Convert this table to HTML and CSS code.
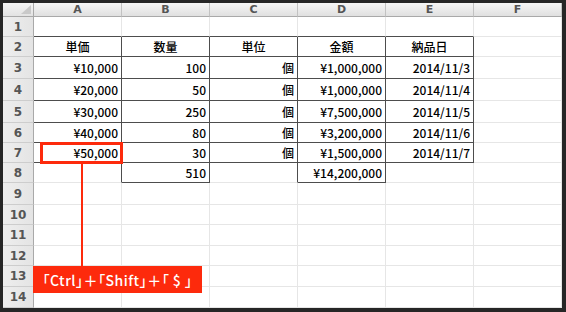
FILE: index.html
```html
<!DOCTYPE html>
<html lang="ja">
<head>
<meta charset="utf-8">
<link rel="stylesheet" href="styles.css">
</head>
<body>
<div class="page">
  <div class="sheet">
    <div class="corner"><span class="tri"></span></div>
    <div class="ch">A</div><div class="ch">B</div><div class="ch">C</div><div class="ch">D</div><div class="ch">E</div><div class="ch">F</div>

    <div class="rh">1</div>
    <div class="cell db"></div><div class="cell db"></div><div class="cell db"></div><div class="cell db"></div><div class="cell db"></div><div class="cell"></div>

    <div class="rh">2</div>
    <div class="cell dr db c">単価</div><div class="cell dr db c">数量</div><div class="cell dr db c">単位</div><div class="cell dr db c">金額</div><div class="cell dr db c">納品日</div><div class="cell"></div>

    <div class="rh">3</div>
    <div class="cell dr db r">¥10,000</div><div class="cell dr db r">100</div><div class="cell dr db r">個</div><div class="cell dr db r">¥1,000,000</div><div class="cell dr db r">2014/11/3</div><div class="cell"></div>

    <div class="rh">4</div>
    <div class="cell dr db r">¥20,000</div><div class="cell dr db r">50</div><div class="cell dr db r">個</div><div class="cell dr db r">¥1,000,000</div><div class="cell dr db r">2014/11/4</div><div class="cell"></div>

    <div class="rh">5</div>
    <div class="cell dr db r">¥30,000</div><div class="cell dr db r">250</div><div class="cell dr db r">個</div><div class="cell dr db r">¥7,500,000</div><div class="cell dr db r">2014/11/5</div><div class="cell"></div>

    <div class="rh">6</div>
    <div class="cell dr db r">¥40,000</div><div class="cell dr db r">80</div><div class="cell dr db r">個</div><div class="cell dr db r">¥3,200,000</div><div class="cell dr db r">2014/11/6</div><div class="cell"></div>

    <div class="rh">7</div>
    <div class="cell dr db r">¥50,000</div><div class="cell dr db r">30</div><div class="cell dr db r">個</div><div class="cell dr db r">¥1,500,000</div><div class="cell dr db r">2014/11/7</div><div class="cell"></div>

    <div class="rh">8</div>
    <div class="cell dr"></div><div class="cell dr db r">510</div><div class="cell dr"></div><div class="cell dr db r">¥14,200,000</div><div class="cell"></div><div class="cell"></div>

    <div class="rh">9</div>
    <div class="cell"></div><div class="cell"></div><div class="cell"></div><div class="cell"></div><div class="cell"></div><div class="cell"></div>
    <div class="rh">10</div>
    <div class="cell"></div><div class="cell"></div><div class="cell"></div><div class="cell"></div><div class="cell"></div><div class="cell"></div>
    <div class="rh">11</div>
    <div class="cell"></div><div class="cell"></div><div class="cell"></div><div class="cell"></div><div class="cell"></div><div class="cell"></div>
    <div class="rh">12</div>
    <div class="cell"></div><div class="cell"></div><div class="cell"></div><div class="cell"></div><div class="cell"></div><div class="cell"></div>
    <div class="rh">13</div>
    <div class="cell"></div><div class="cell"></div><div class="cell"></div><div class="cell"></div><div class="cell"></div><div class="cell"></div>
    <div class="rh">14</div>
    <div class="cell"></div><div class="cell"></div><div class="cell"></div><div class="cell"></div><div class="cell"></div><div class="cell"></div>
  </div>

  <div class="mark-box"></div>
  <div class="mark-line"></div>
  <div class="callout">「Ctrl」＋「Shift」＋「 $ 」</div>
</div>
</body>
</html>
```
FILE: styles.css
```css
* { box-sizing: border-box; }
html, body { margin: 0; padding: 0; background: #fff; }
.page { position: relative; width: 566px; height: 312px; }
.sheet {
  display: grid;
  grid-template-columns: 31px repeat(6, 88px);
  grid-template-rows: 14px 20px 20px 22px 22px 22px 20px 20px 20px 22px 20px 21px 20px 21px 21px;
  border-style: solid;
  border-color: #262626;
  border-width: 3px 4px 4px 3px;
  width: 566px;
  height: 312px;
}
.corner {
  background: linear-gradient(#f5f5f5, #e2e2e2);
  border-right: 1px solid #a9a9a9;
  border-bottom: 1px solid #a9a9a9;
  display: flex;
  justify-content: flex-end;
  align-items: flex-end;
  padding: 0 2px 2px 0;
}
.tri {
  width: 10px;
  height: 9px;
  background: #c9c9c9;
  clip-path: polygon(100% 0, 100% 100%, 0 100%);
}
.ch {
  background: linear-gradient(#f6f6f6, #e0e0e0);
  border-right: 1px solid #c2c2c2;
  border-bottom: 1px solid #a9a9a9;
  font: bold 11px/13px "DejaVu Sans", sans-serif;
  color: #555;
  text-align: center;
}
.rh {
  background: linear-gradient(90deg, #eeeeee, #e4e4e4);
  border-right: 1px solid #a9a9a9;
  border-bottom: 1px solid #cdcdcd;
  font: bold 12px "DejaVu Sans", sans-serif;
  color: #555;
  display: flex;
  align-items: center;
  justify-content: center;
}
.cell {
  border-right: 1px solid #e6e6e6;
  border-bottom: 1px solid #e6e6e6;
  font: 500 12px "Noto Sans CJK JP", sans-serif;
  color: #000;
  display: flex;
  align-items: center;
  padding: 0 3px;
  white-space: nowrap;
}
.cell.r { justify-content: flex-end; }
.cell.c { justify-content: center; }
.cell.dr { border-right-color: #4d4d4d; }
.cell.db { border-bottom-color: #4d4d4d; }

.mark-box {
  position: absolute;
  left: 40px;
  top: 142px;
  width: 83px;
  height: 22px;
  border: 3px solid #fd2a0c;
}
.mark-line {
  position: absolute;
  left: 81px;
  top: 164px;
  width: 2px;
  height: 102px;
  background: #fd2a0c;
}
.callout {
  position: absolute;
  left: 33px;
  top: 266px;
  width: 169px;
  height: 27px;
  background: #fd2a0c;
  color: #fff;
  font: 500 14px "Noto Sans CJK JP", sans-serif;
  font-feature-settings: "palt";
  letter-spacing: 0.5px;
  white-space: pre;
  display: flex;
  align-items: center;
  justify-content: center;
}
```
